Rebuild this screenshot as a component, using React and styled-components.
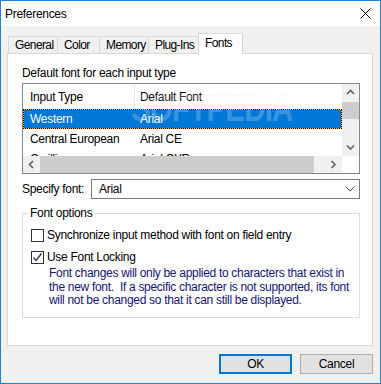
import React from 'react'
import styled, { createGlobalStyle } from 'styled-components'

const GlobalStyle = createGlobalStyle`
  html, body { margin: 0; padding: 0; background: #fff; }
  body {
    font-family: "Liberation Sans", Arial, sans-serif;
    font-size: 12px;
    letter-spacing: -0.3px;
    color: #000;
  }
  * { box-sizing: border-box; }
`

const Window = styled.div`
  width: 381px;
  height: 384px;
  border: 1px solid #1c84d8;
  background: #f0f0f0;
  display: flex;
  flex-direction: column;
  overflow: hidden;
`

const TitleBar = styled.div`
  height: 25px;
  background: #fff;
  display: flex;
  align-items: center;
  justify-content: space-between;
  padding: 0 9px 0 4px;
`

const Body = styled.div`
  flex: 1;
  display: flex;
  flex-direction: column;
  padding: 7px 7px 9px 6px;
`

const TabRow = styled.div`
  display: flex;
  align-items: flex-end;
  height: 21px;
  padding-left: 1px;
  margin-bottom: -1px;
  position: relative;
  z-index: 1;
`

const Tab = styled.div`
  width: ${p => p.w}px;
  height: ${p => (p.active ? 21 : 17)}px;
  margin-bottom: ${p => (p.active ? 0 : 1)}px;
  margin-right: -1px;
  border: 1px solid #d9d9d9;
  border-bottom: none;
  background: ${p => (p.active ? '#fff' : '#f0f0f0')};
  padding: 0 0 ${p => (p.active ? 2 : 0)}px 6px;
  display: flex;
  align-items: center;
  letter-spacing: -0.6px;
  white-space: nowrap;
  position: relative;
  z-index: ${p => (p.active ? 2 : 1)};
`

const Panel = styled.div`
  height: 293px;
  border: 1px solid #d9d9d9;
  background: #fff;
  padding: 12px 12px 0 14px;
  display: flex;
  flex-direction: column;
`

const Caption = styled.div`
  line-height: 14px;
  margin-bottom: 3px;
`

const ListBox = styled.div`
  height: 91px;
  border: 1px solid #828790;
  display: grid;
  grid-template-columns: 1fr 17px;
  grid-template-rows: 1fr 17px;
  position: relative;
  background: #fff;
`

const ListView = styled.div`
  overflow: hidden;
`

const HeaderRow = styled.div`
  display: flex;
  height: 25px;
  align-items: stretch;
`

const HeaderCell = styled.div`
  display: flex;
  align-items: center;
  width: ${p => (p.w ? `${p.w}px` : 'auto')};
  flex: ${p => (p.w ? 'none' : 1)};
  padding-left: ${p => p.pad}px;
  border-right: ${p => (p.w ? '1px solid #e5e5e5' : 'none')};
`

const Row = styled.div`
  display: flex;
  align-items: center;
  height: 20px;
  border: 1px ${p => (p.selected ? 'dotted #000' : 'solid transparent')};
  background: ${p =>
    p.selected
      ? 'linear-gradient(#0078d7, #0078d7) padding-box, #f3a53c border-box'
      : 'transparent'};
  color: ${p => (p.selected ? '#fff' : '#000')};
  white-space: nowrap;
`

const Cell = styled.div`
  width: ${p => (p.w ? `${p.w}px` : 'auto')};
  flex: ${p => (p.w ? 'none' : 1)};
  padding-left: ${p => p.pad}px;
`

const VScroll = styled.div`
  background: #f0f0f0;
  display: flex;
  flex-direction: column;
`

const HScroll = styled.div`
  background: #f0f0f0;
  display: flex;
  align-items: stretch;
`

const ArrowBtn = styled.div`
  width: 17px;
  height: 17px;
  flex: none;
  display: flex;
  align-items: center;
  justify-content: center;
`

const VThumb = styled.div`
  height: 17px;
  margin-top: 1px;
  background: #cdcdcd;
`

const HThumb = styled.div`
  width: 274px;
  background: #cdcdcd;
`

const Spacer = styled.div`
  flex: 1;
`

const Corner = styled.div`
  background: #fff;
`

const Watermark = styled.div`
  position: absolute;
  left: 108px;
  top: 4px;
  font-family: "Liberation Sans", Arial, sans-serif;
  font-weight: bold;
  font-size: 36px;
  letter-spacing: -1px;
  transform: scaleX(0.82);
  transform-origin: left top;
  color: rgba(255, 255, 255, 0.22);
  -webkit-text-stroke: 1px rgba(120, 120, 120, 0.07);
  pointer-events: none;
  white-space: nowrap;
`

const ComboRow = styled.div`
  display: flex;
  align-items: center;
  margin-top: 5px;
  height: 20px;
`

const ComboLabel = styled.div`
  width: 69px;
  flex: none;
`

const Combo = styled.div`
  flex: 1;
  height: 20px;
  border: 1px solid #7a7a7a;
  background: #fff;
  display: flex;
  align-items: center;
  justify-content: space-between;
  padding: 0 4px 0 7px;
`

const Group = styled.fieldset`
  margin: 7px 0 0;
  border: 1px solid #dcdcdc;
  padding: 0 0 9px 5px;
  min-width: 0;
`

const Legend = styled.legend`
  padding: 0 2px;
  line-height: 14px;
`

const CheckRow = styled.div`
  display: flex;
  align-items: center;
  height: 16px;
  margin: ${p => p.top}px 0 0 3px;
  gap: 3px;
`

const Box = styled.div`
  width: 13px;
  height: 13px;
  border: 1px solid #333;
  background: #fff;
  display: flex;
  align-items: center;
  justify-content: center;
`

const Note = styled.div`
  margin: 2px 0 0 21px;
  line-height: 13.5px;
  color: #141478;
`

const ButtonRow = styled.div`
  display: flex;
  justify-content: flex-end;
  gap: 8px;
  margin-top: 8px;
`

const Button = styled.button`
  width: 73px;
  height: 20px;
  background: #e1e1e1;
  border: ${p => (p.primary ? '2px solid #0078d7' : '1px solid #adadad')};
  font: inherit;
  letter-spacing: inherit;
  color: #000;
  padding: 0;
`

const Chevron = ({ dir }) => {
  const pts = {
    up: '1,5 4.5,1.5 8,5',
    down: '1,1.5 4.5,5 8,1.5',
    left: '5,1 1.5,4.5 5,8',
    right: '1.5,1 5,4.5 1.5,8',
  }[dir]
  const horiz = dir === 'left' || dir === 'right'
  return (
    <svg width={horiz ? 7 : 9} height={horiz ? 9 : 7} viewBox={horiz ? '0 0 7 9' : '0 0 9 7'}>
      <polyline points={pts} fill="none" stroke="#606060" strokeWidth="1.6" />
    </svg>
  )
}

const tabs = [
  { name: 'General', w: 50 },
  { name: 'Color', w: 43 },
  { name: 'Memory', w: 50 },
  { name: 'Plug-Ins', w: 51 },
  { name: 'Fonts', w: 45, active: true },
]

const rows = [
  { type: 'Western', font: 'Arial', selected: true },
  { type: 'Central European', font: 'Arial CE' },
  { type: 'Cyrillic', font: 'Arial CYR' },
]

export default function App() {
  return (
    <>
      <GlobalStyle />
      <Window>
        <TitleBar>
          <span>Preferences</span>
          <svg width="11" height="11" viewBox="0 0 11 11">
            <path d="M0.5 0.5 L10.5 10.5 M10.5 0.5 L0.5 10.5" stroke="#000" strokeWidth="1" />
          </svg>
        </TitleBar>
        <Body>
          <TabRow>
            {tabs.map(t => (
              <Tab key={t.name} w={t.w} active={t.active}>
                {t.name}
              </Tab>
            ))}
          </TabRow>
          <Panel>
            <Caption>Default font for each input type</Caption>
            <ListBox>
              <ListView>
                <HeaderRow>
                  <HeaderCell w={112} pad={7}>Input Type</HeaderCell>
                  <HeaderCell pad={5}>Default Font</HeaderCell>
                </HeaderRow>
                {rows.map(r => (
                  <Row key={r.type} selected={r.selected}>
                    <Cell w={111} pad={6}>{r.type}</Cell>
                    <Cell pad={5}>{r.font}</Cell>
                  </Row>
                ))}
              </ListView>
              <VScroll>
                <ArrowBtn><Chevron dir="up" /></ArrowBtn>
                <VThumb />
                <Spacer />
                <ArrowBtn><Chevron dir="down" /></ArrowBtn>
              </VScroll>
              <HScroll>
                <ArrowBtn><Chevron dir="left" /></ArrowBtn>
                <HThumb />
                <Spacer />
                <ArrowBtn><Chevron dir="right" /></ArrowBtn>
              </HScroll>
              <Corner />
              <Watermark>SOFTPEDIA</Watermark>
            </ListBox>
            <ComboRow>
              <ComboLabel>Specify font:</ComboLabel>
              <Combo>
                <span>Arial</span>
                <svg width="10" height="6" viewBox="0 0 10 6">
                  <polyline points="0.5,0.5 5,5 9.5,0.5" fill="none" stroke="#555" strokeWidth="1" />
                </svg>
              </Combo>
            </ComboRow>
            <Group>
              <Legend>Font options</Legend>
              <CheckRow top={7}>
                <Box />
                <span>Synchronize input method with font on field entry</span>
              </CheckRow>
              <CheckRow top={6}>
                <Box>
                  <svg width="11" height="11" viewBox="0 0 11 11">
                    <polyline points="1.5,5.5 4,8.5 9.5,1.5" fill="none" stroke="#333" strokeWidth="1.3" />
                  </svg>
                </Box>
                <span>Use Font Locking</span>
              </CheckRow>
              <Note>
                Font changes will only be applied to characters that exist in
                <br />
                the new font.&nbsp; If a specific character is not supported, its font
                <br />
                will not be changed so that it can still be displayed.
              </Note>
            </Group>
          </Panel>
          <ButtonRow>
            <Button primary>OK</Button>
            <Button>Cancel</Button>
          </ButtonRow>
        </Body>
      </Window>
    </>
  )
}
